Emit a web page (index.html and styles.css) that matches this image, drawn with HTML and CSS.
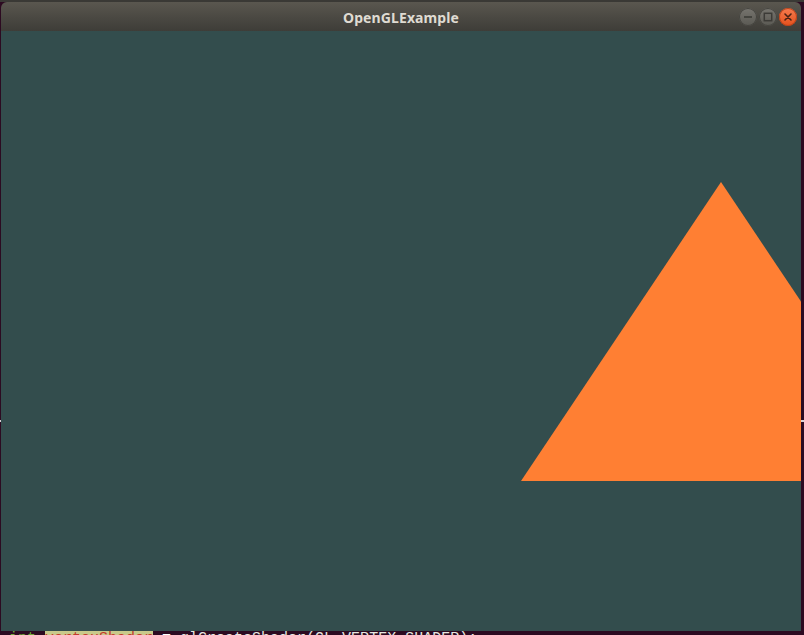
FILE: index.html
```html
<!DOCTYPE html>
<html>
<head>
<meta charset="utf-8">
<link rel="stylesheet" href="styles.css">
</head>
<body>
<div class="desktop">
  <span class="mark mark-left"></span>
  <span class="mark mark-right"></span>
  <div class="topstrip"></div>
  <div class="window">
    <div class="titlebar">
      <div class="spacer"></div>
      <div class="title">OpenGLExample</div>
      <div class="buttons">
        <span class="btn btn-gray">
          <svg width="18" height="18" viewBox="0 0 18 18"><line x1="5" y1="9" x2="13" y2="9" stroke="#3c3b37" stroke-width="1.6"/></svg>
        </span>
        <span class="btn btn-gray">
          <svg width="18" height="18" viewBox="0 0 18 18"><rect x="5.3" y="5.3" width="7.4" height="7.4" fill="none" stroke="#3c3b37" stroke-width="1.5"/></svg>
        </span>
        <span class="btn btn-close">
          <svg width="18" height="18" viewBox="0 0 18 18"><path d="M6 6 L12 12 M12 6 L6 12" stroke="#4a2214" stroke-width="1.6" stroke-linecap="round"/></svg>
        </span>
      </div>
    </div>
    <div class="gl">
      <svg class="scene" width="800" height="600" viewBox="0 0 800 600">
        <polygon points="520,450 920,450 720,151" fill="#ff7f33"/>
      </svg>
    </div>
  </div>
  <div class="terminal">
    <div class="line"><span class="kw">int</span> <span class="hl">vertexShader</span> <span class="op">=</span> glCreateShader(GL_VERTEX_SHADER);</div>
  </div>
</div>
</body>
</html>
```
FILE: styles.css
```css
html, body {
  margin: 0;
  padding: 0;
  background: #2c0a21;
}
.desktop {
  position: relative;
  width: 804px;
  height: 635px;
  overflow: hidden;
  background: #2c0a21;
  display: flex;
  flex-direction: column;
}
.topstrip {
  height: 2px;
  background: #3a3935;
}
.window {
  margin-left: 1px;
  width: 800px;
  display: flex;
  flex-direction: column;
}
.titlebar {
  height: 29px;
  border-radius: 6px 6px 0 0;
  background: linear-gradient(to bottom, #5a574f 0%, #4a4842 55%, #3e3d38 100%);
  display: grid;
  grid-template-columns: 1fr auto 1fr;
  align-items: center;
}
.title {
  font-family: "Noto Sans", "Open Sans", sans-serif;
  font-weight: bold;
  font-size: 14px;
  color: #dfdbd2;
  letter-spacing: 0.1px;
  padding-top: 1px;
}
.buttons {
  display: flex;
  justify-content: flex-end;
  gap: 2px;
  padding-right: 4px;
  padding-top: 1px;
}
.btn {
  width: 18px;
  height: 18px;
  border-radius: 50%;
  display: flex;
  align-items: center;
  justify-content: center;
  box-sizing: border-box;
}
.btn svg {
  display: block;
}
.btn-gray {
  background: linear-gradient(to bottom, #77756f, #5a5953);
  box-shadow: inset 0 0 0 1px #45443f;
}
.btn-close {
  background: linear-gradient(to bottom, #f67c4f, #e4501c);
  box-shadow: inset 0 0 0 1px #b8421b;
}
.gl {
  width: 800px;
  height: 600px;
  background: #334d4d;
  overflow: hidden;
}
.scene {
  display: block;
}
.terminal {
  height: 4px;
  overflow: hidden;
  background: #2c0a21;
}
.line {
  font-family: "Liberation Mono", monospace;
  font-size: 15px;
  line-height: 15px;
  white-space: pre;
  color: #e8e8e2;
  padding-left: 9px;
}
.kw {
  color: #6fa83a;
}
.hl {
  background: #c9c98a;
  color: #c43a2a;
}
.op {
  color: #ffffff;
}
.mark {
  position: absolute;
  top: 420px;
  height: 2px;
  background: #d8d2d6;
}
.mark-left {
  left: 0;
  width: 1px;
}
.mark-right {
  left: 801px;
  width: 3px;
}
```
